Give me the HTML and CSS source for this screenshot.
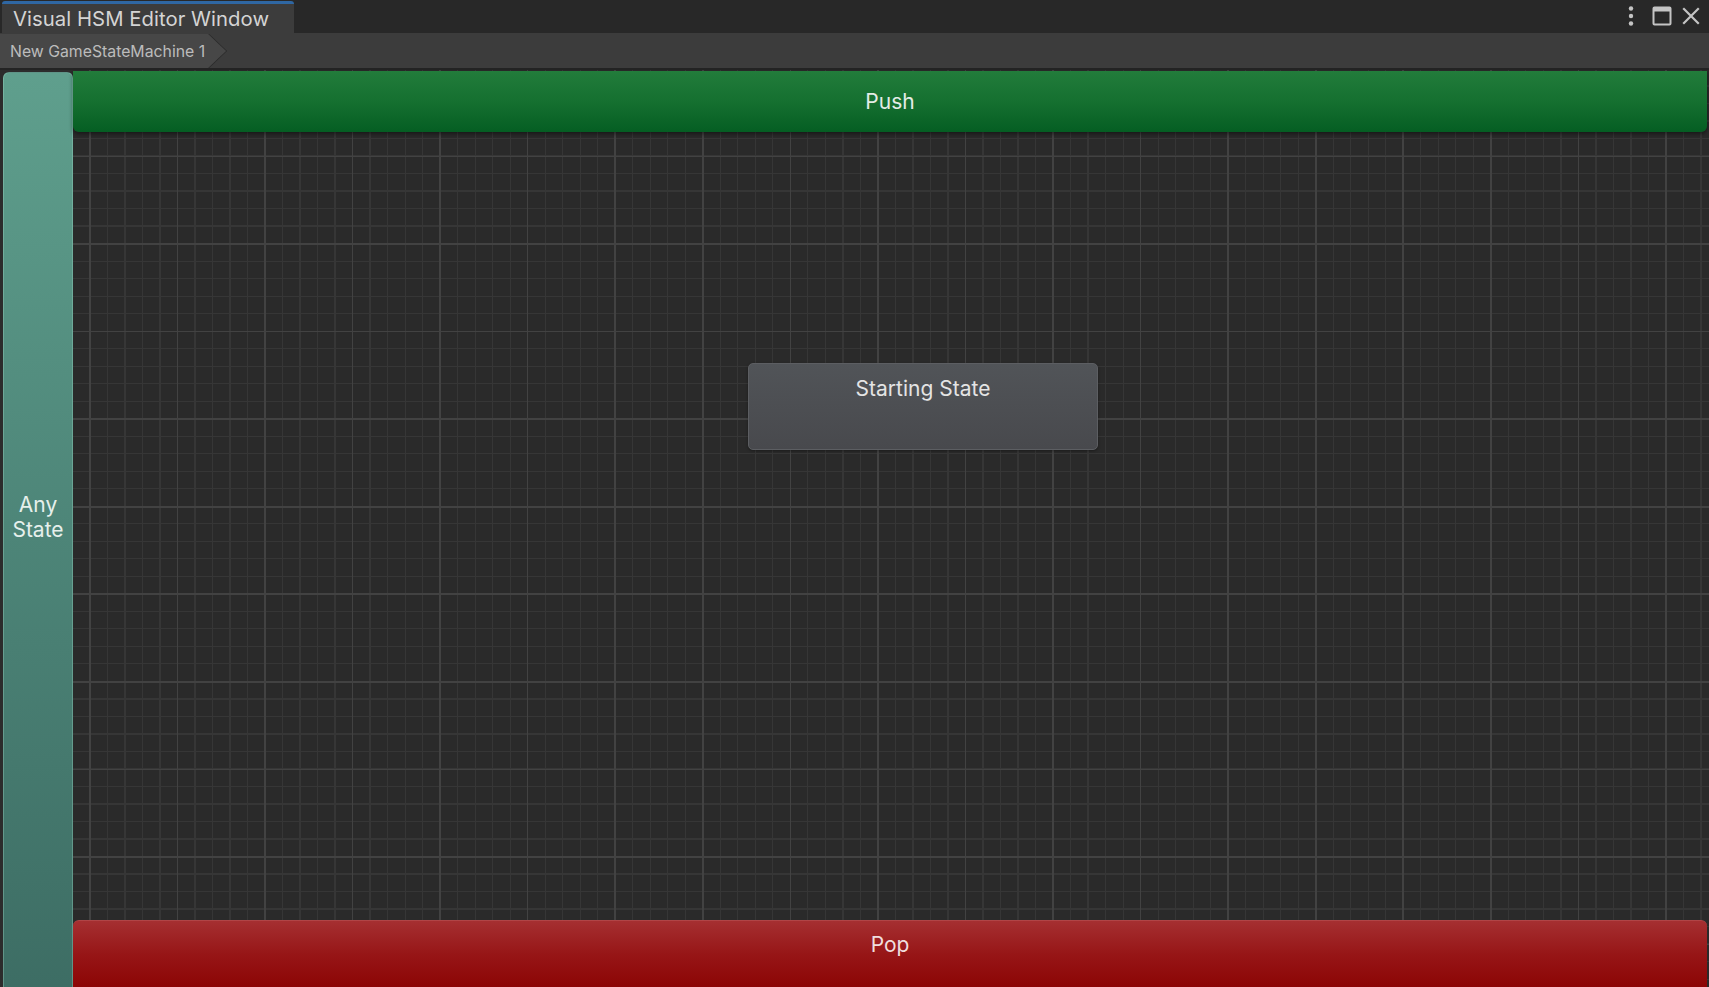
FILE: index.html
```html
<!DOCTYPE html>
<html>
<head>
<meta charset="utf-8">
<link rel="stylesheet" href="styles.css">
</head>
<body>
<div class="window">
  <header class="titlebar">
    <div class="tab"><span class="tab-label">Visual HSM Editor Window</span></div>
    <div class="win-controls">
      <svg class="ico dots" width="10" height="22" viewBox="0 0 10 22"><circle cx="5" cy="3.5" r="2.2" fill="#c4c4c4"/><circle cx="5" cy="11" r="2.2" fill="#c4c4c4"/><circle cx="5" cy="18.5" r="2.2" fill="#c4c4c4"/></svg>
      <svg class="ico maxi" width="20" height="20" viewBox="0 0 20 20"><rect x="1.5" y="1.5" width="17" height="17" rx="1" fill="none" stroke="#c4c4c4" stroke-width="2"/><rect x="1.5" y="1.5" width="17" height="4" fill="#c4c4c4"/></svg>
      <svg class="ico" width="18" height="18" viewBox="0 0 18 18"><path d="M2 2 L16 16 M16 2 L2 16" stroke="#c4c4c4" stroke-width="2.2" stroke-linecap="square"/></svg>
    </div>
  </header>
  <nav class="breadcrumbs">
    <div class="crumb-edge"><div class="crumb">New GameStateMachine 1</div></div>
  </nav>
  <main class="main">
    <aside class="any-state"><span>Any<br>State</span></aside>
    <section class="canvas">
      <div class="push-bar">Push</div>
      <div class="canvas-space">
        <div class="node" style="left:675px; top:231px;">Starting State</div>
      </div>
      <div class="pop-bar">Pop</div>
    </section>
  </main>
</div>
</body>
</html>
```
FILE: styles.css
```css
* { box-sizing: border-box; }
html, body { margin: 0; padding: 0; }
body {
  width: 1709px;
  height: 987px;
  overflow: hidden;
  background: #282828;
  font-family: Inter, "Noto Sans", "Liberation Sans", sans-serif;
}
.window { display: flex; flex-direction: column; height: 987px; }

.titlebar {
  height: 33px;
  display: flex;
  align-items: stretch;
  justify-content: space-between;
  background: #282828;
}
.tab {
  width: 292px;
  margin-left: 2px;
  margin-top: 1px;
  background: #3c3c3c;
  border-top: 3px solid #2f67a3;
  border-radius: 3px 3px 0 0;
  display: flex;
  align-items: center;
  padding-left: 11px;
}
.tab-label { color: #d4d4d4; font-size: 20.3px; line-height: 24px; margin-top: 1px; letter-spacing: 0.05px; }
.win-controls { display: flex; align-items: center; padding-right: 9px; padding-bottom: 2px; }
.ico { display: block; }
.dots { margin-right: 16px; }
.maxi { margin-right: 10px; }

.breadcrumbs {
  height: 37px;
  background: #3c3c3c;
  border-bottom: 2px solid #242424;
  display: flex;
  align-items: stretch;
  padding-top: 1px;
}
.crumb-edge {
  background: #2a2a2a;
  padding-right: 1px;
  clip-path: polygon(0 0, calc(100% - 18px) 0, 100% 50%, calc(100% - 18px) 100%, 0 100%);
}
.crumb {
  height: 100%;
  background: #474747;
  color: #bcbcbc;
  font-size: 15.8px;
  display: flex;
  align-items: center;
  padding: 0 21px 0 10px;
  clip-path: polygon(0 0, calc(100% - 18px) 0, 100% 50%, calc(100% - 18px) 100%, 0 100%);
}

.main { flex: 1; display: flex; background: #2c2c2c; min-height: 0; }

.any-state {
  width: 70px;
  margin-left: 3px;
  margin-top: 2px;
  border: 1px solid rgba(160, 220, 200, 0.35);
  border-radius: 6px;
  background: linear-gradient(to bottom, #5f9f8d 0%, #4d8578 50%, #3d6d64 100%);
  color: #e6f0ec;
  font-size: 21px;
  line-height: 25px;
  text-align: center;
  display: flex;
  align-items: center;
  justify-content: center;
  padding-bottom: 32px;
  margin-bottom: -6px;
}

.canvas {
  flex: 1;
  display: flex;
  flex-direction: column;
  background-color: #2a2a2a;
  background-image:
    repeating-linear-gradient(to right, transparent 0 16.1px, #424242 16.1px 17.7px, transparent 17.7px 87.56px),
    repeating-linear-gradient(to bottom, transparent 0 85.7px, #424242 85.7px 87.3px, transparent 87.3px 87.56px),
    repeating-linear-gradient(to right, transparent 0 16.3px, #363636 16.3px 17.5px, transparent 17.5px 17.512px),
    repeating-linear-gradient(to bottom, transparent 0 15.4px, #363636 15.4px 16.6px, transparent 16.6px 17.512px);
}

.push-bar {
  margin-top: 1px;
  height: 61px;
  flex: none;
  background: linear-gradient(to bottom, #227c3b 0%, #157030 50%, #055e23 100%);
  border-radius: 0 0 6px 6px;
  margin-right: 2px;
  box-shadow: 0 2px 4px rgba(0, 0, 0, 0.45);
  color: #e4ece6;
  font-size: 21px;
  display: flex;
  align-items: center;
  justify-content: center;
  position: relative;
  z-index: 1;
}
.canvas-space { flex: 1; position: relative; }
.node {
  position: absolute;
  width: 350px;
  height: 87px;
  background: linear-gradient(to bottom, #515458 0%, #48494d 100%);
  border: 1px solid #5c5e62;
  border-radius: 5px;
  box-shadow: 0 1px 3px rgba(0, 0, 0, 0.35);
  color: #e4e4e4;
  font-size: 21px;
  line-height: 26px;
  text-align: center;
  padding-top: 12px;
}
.pop-bar {
  height: 67px;
  flex: none;
  margin-right: 2px;
  background: linear-gradient(to bottom, #a52f31 0%, #971617 50%, #8c0505 100%);
  border-radius: 6px 6px 0 0;
  border-top: 1px solid #b04446;
  color: #f0dede;
  font-size: 21px;
  line-height: 26px;
  text-align: center;
  padding-top: 11px;
}
```
